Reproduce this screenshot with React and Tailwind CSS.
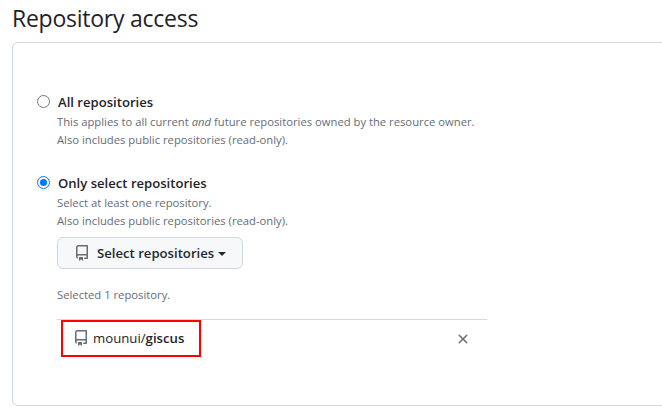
const REPO = "M2 2.5A2.5 2.5 0 0 1 4.5 0h8.75a.75.75 0 0 1 .75.75v12.5a.75.75 0 0 1-.75.75h-2.5a.75.75 0 0 1 0-1.5h1.75v-2h-8a1 1 0 0 0-.714 1.7.75.75 0 1 1-1.072 1.05A2.495 2.495 0 0 1 2 11.5Zm10.5-1h-8a1 1 0 0 0-1 1v6.708A2.486 2.486 0 0 1 4.5 9h8ZM5 12.25a.25.25 0 0 1 .25-.25h3.5a.25.25 0 0 1 .25.25v3.25a.25.25 0 0 1-.4.2l-1.45-1.087a.249.249 0 0 0-.3 0L5.4 15.7a.25.25 0 0 1-.4-.2Z";

function RepoIcon({ className }) {
  return (
    <svg viewBox="0 0 16 16" width="16" height="16" fill="currentColor" className={className}>
      <path d={REPO} />
    </svg>
  );
}

function Radio({ checked }) {
  if (checked) {
    return (
      <span className="mt-[3px] flex h-[13px] w-[13px] shrink-0 items-center justify-center rounded-full border-[1.5px] border-[#0075ff] bg-white">
        <span className="block h-[7px] w-[7px] rounded-full bg-[#0075ff]" />
      </span>
    );
  }
  return <span className="mt-[3px] block h-[13px] w-[13px] shrink-0 rounded-full border border-[#767676] bg-white" />;
}

function Option({ checked, title, children }) {
  return (
    <div className="flex gap-[8px]">
      <Radio checked={checked} />
      <div className="min-w-0">
        <div className="h-[20px] text-[13.1px] font-semibold leading-[20px] text-[#1f2328]">{title}</div>
        <div className="-ml-[1px] mt-[1px] text-[11.25px] leading-[18px] text-[#656d76]">{children}</div>
      </div>
    </div>
  );
}

export default function App() {
  return (
    <div className="h-[407px] w-[662px] overflow-hidden bg-white pl-[12px] font-['Open_Sans','Noto_Sans',sans-serif]">
      <h2 className="h-[42px] pt-[1px] text-[23px] font-normal leading-[34px] tracking-[-0.25px] text-[#1f2328]">Repository access</h2>
      <div className="h-[364px] w-[700px] rounded-[6px] border border-[#d0d7de] pl-[24px] pt-[49px]">
        <Option title="All repositories">
          <div>This applies to all current <em>and</em> future repositories owned by the resource owner.</div>
          <div>Also includes public repositories (read-only).</div>
        </Option>
        <div className="mt-[24px]">
          <Option checked title="Only select repositories">
            <div>Select at least one repository.</div>
            <div>Also includes public repositories (read-only).</div>
          </Option>
        </div>
        <div className="ml-[20px]">
          <button className="mt-[7px] flex h-[32px] w-[186px] items-center rounded-[6px] border border-[#d0d7de] bg-[#f6f8fa] pl-[16px] text-[13.15px] font-semibold text-[#24292f]">
            <RepoIcon className="mr-[7px] text-[#656d76]" />
            <span className="pt-[1px]">Select repositories</span>
            <span className="ml-[4px] mt-[2px] h-0 w-0 border-x-[4px] border-t-[4px] border-x-transparent border-t-[#24292f]" />
          </button>
          <div className="mt-[17px] text-[11.25px] leading-[18px] text-[#656d76]">Selected 1 repository.</div>
          <div className="relative mt-[15px] flex h-[38px] w-[430px] items-center justify-between border-t border-[#d0d7de] pl-[16px] pr-[16px]">
            <div className="flex items-center gap-[4px] text-[13.2px] text-[#1f2328]">
              <RepoIcon className="text-[#656d76]" />
              <span className="pt-[1px]">mounui/<span className="font-semibold">giscus</span></span>
            </div>
            <svg viewBox="0 0 16 16" width="16" height="16" fill="#656d76">
              <path d="M3.72 3.72a.75.75 0 0 1 1.06 0L8 6.94l3.22-3.22a.749.749 0 0 1 1.06 1.06L9.06 8l3.22 3.22a.749.749 0 0 1-1.06 1.06L8 9.06l-3.22 3.22a.749.749 0 0 1-1.06-1.06L6.94 8 3.72 4.78a.75.75 0 0 1 0-1.06Z" />
            </svg>
            <div className="absolute left-[4px] top-0 h-[37px] w-[140px] border-2 border-[#ff0000]" />
          </div>
        </div>
      </div>
    </div>
  );
}
